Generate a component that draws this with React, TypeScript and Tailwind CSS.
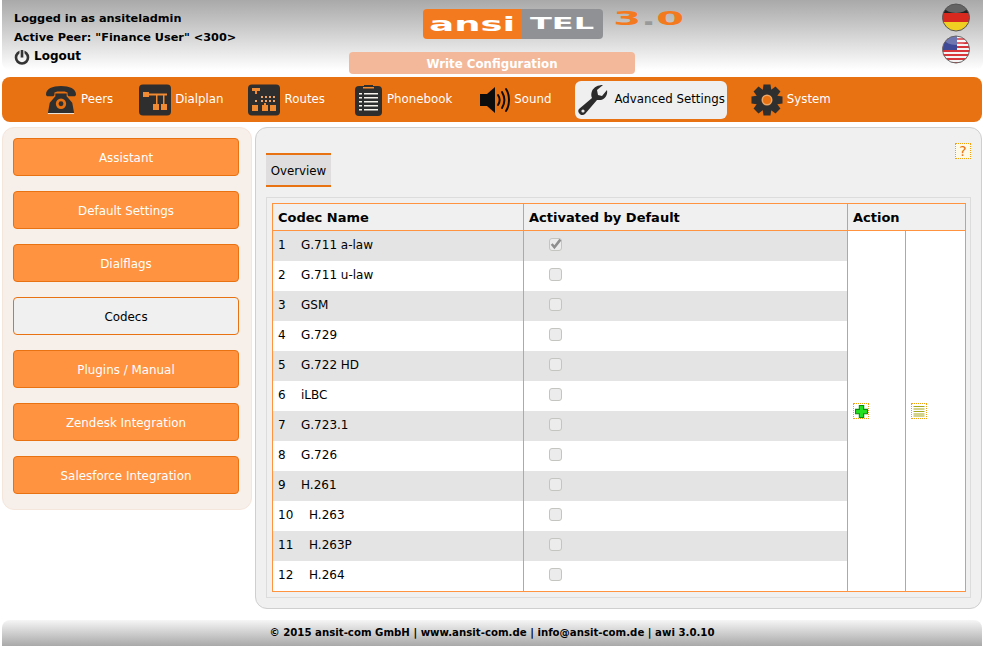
const codecs = [
  "G.711 a-law",
  "G.711 u-law",
  "GSM",
  "G.729",
  "G.722 HD",
  "iLBC",
  "G.723.1",
  "G.726",
  "H.261",
  "H.263",
  "H.263P",
  "H.264",
];

const sideItems = [
  "Assistant",
  "Default Settings",
  "Dialflags",
  "Codecs",
  "Plugins / Manual",
  "Zendesk Integration",
  "Salesforce Integration",
];

function PhoneIcon() {
  return (
    <svg width="32" height="30" viewBox="0 0 34 32">
      <path d="M1 10C1 4 8 1 17 1s16 3 16 9c0 1-1 2-2 2h-5c-1 0-2-1-2-2V8c-2-1-4-1-7-1s-5 0-7 1v2c0 1-1 2-2 2H3c-1 0-2-1-2-2z" fill="#2f2f2f" />
      <path d="M11 9h12v3l6 7 2 11H3l2-11 6-7z" fill="#2f2f2f" />
      <circle cx="17" cy="20" r="5.5" fill="#e87111" />
      <circle cx="17" cy="20" r="2.6" fill="#2f2f2f" />
      <path d="M3 30h28v1H3z" fill="#f4f4f4" />
    </svg>
  );
}

function DialplanIcon() {
  return (
    <svg width="32" height="32" viewBox="0 0 32 32">
      <rect width="32" height="31" y="0.5" rx="4" fill="#2e2e2e" />
      <rect x="4" y="8" width="6" height="5" fill="#f08a33" />
      <path d="M10 9.5h18v2H10z" fill="#f08a33" />
      <path d="M17 11h1.5v10H17zM24 11h1.5v10H24z" fill="#f08a33" />
      <rect x="14" y="20" width="6" height="6" fill="#f08a33" />
      <rect x="22" y="20" width="6" height="6" fill="#f08a33" />
    </svg>
  );
}

function RoutesIcon() {
  return (
    <svg width="32" height="32" viewBox="0 0 32 32">
      <rect width="32" height="31" y="0.5" rx="4" fill="#2e2e2e" />
      <rect x="4" y="4" width="8" height="3" fill="#f08a33" />
      <rect x="7" y="7" width="2" height="3" fill="#f08a33" />
      <path d="M13 12h2v2h-2zM17 12h2v2h-2zM21 12h2v2h-2zM25 12h2v2h-2zM7 16h2v2H7zM13 16h2v2h-2zM17 16h2v2h-2zM21 16h2v2h-2zM25 16h2v2h-2z" fill="#f0a468" />
      <rect x="4" y="21" width="6" height="6" fill="#f08a33" />
      <rect x="14" y="21" width="6" height="6" fill="#f08a33" />
      <rect x="22" y="21" width="6" height="6" fill="#f08a33" />
      <rect x="16" y="19" width="2" height="2" fill="#f08a33" />
    </svg>
  );
}

function PhonebookIcon() {
  return (
    <svg width="28" height="32" viewBox="0 0 28 32">
      <rect y="2" width="27" height="30" rx="4" fill="#2e2e2e" />
      <path d="M9 3h9V1h-9z" fill="#2e2e2e" />
      <path d="M8 3h11v1.5H8z" fill="#f08a33" />
      <path d="M4 9h3v1.5H4zM9 9h14v1.5H9zM4 13h3v1.5H4zM9 13h14v1.5H9zM4 17h3v1.5H4zM9 17h14v1.5H9zM4 21h3v1.5H4zM9 21h14v1.5H9zM4 25h3v1.5H4zM9 25h14v1.5H9z" fill="#f6f1ea" />
    </svg>
  );
}

function SoundIcon() {
  return (
    <svg width="32" height="28" viewBox="0 0 32 28">
      <path d="M1 8h7l8-7v26l-8-7H1z" fill="#0d0d0d" />
      <path d="M19 9c2 3 2 7 0 10M23 6c3 5 3 11 0 16M27 3c4 6 4 16 0 22" fill="none" stroke="#0d0d0d" strokeWidth="2" strokeLinecap="round" />
    </svg>
  );
}

function WrenchIcon() {
  return (
    <svg width="30" height="32" viewBox="0 0 30 32">
      <path d="M29 6c1 5-2 9-6 10-2 0-3 0-4 0L7 30c-2 2-5 1-6-1-1-1-1-3 0-4l13-11c-1-2-1-4 0-7 2-4 6-6 11-6l-6 5 1 5 4 1z" fill="#2b2b2b" />
      <circle cx="5" cy="27" r="1.6" fill="#e8e8e8" />
    </svg>
  );
}

function GearIcon() {
  const angles = [0, 45, 90, 135, 180, 225, 270, 315];
  return (
    <svg width="32" height="32" viewBox="0 0 32 32">
      {angles.map(a => (
        <path key={a} d="M12.5 0.5h7l1 7h-9z" fill="#2f2f2f" transform={`rotate(${a} 16 16)`} />
      ))}
      <circle cx="16" cy="16" r="11" fill="#2f2f2f" />
      <circle cx="16" cy="16" r="5.5" fill="#eda766" />
      <circle cx="16" cy="16" r="4" fill="#e87111" />
    </svg>
  );
}

function PowerIcon() {
  return (
    <svg width="16" height="16" viewBox="0 0 16 16">
      <circle cx="8" cy="8.5" r="6" fill="none" stroke="#333" strokeWidth="2.6" />
      <path d="M8 1v8" stroke="#e8e8e8" strokeWidth="5" />
      <path d="M8 1v7.5" stroke="#333" strokeWidth="2.6" />
    </svg>
  );
}

function GermanFlag() {
  return (
    <svg width="28" height="29" viewBox="0 0 28 29">
      <defs>
        <clipPath id="flagDe">
          <circle cx="14" cy="14.5" r="13.5" />
        </clipPath>
      </defs>
      <g clipPath="url(#flagDe)">
        <rect width="28" height="10" fill="#222" />
        <rect y="10" width="28" height="9" fill="#d8291f" />
        <rect y="19" width="28" height="10" fill="#f0cf22" />
        <ellipse cx="14" cy="5" rx="11" ry="5" fill="#fff" opacity="0.3" />
      </g>
      <circle cx="14" cy="14.5" r="13.5" fill="none" stroke="#555" />
    </svg>
  );
}

function UsFlag() {
  return (
    <svg width="28" height="29" viewBox="0 0 28 29">
      <defs>
        <clipPath id="flagUs">
          <circle cx="14" cy="14.5" r="13.5" />
        </clipPath>
      </defs>
      <g clipPath="url(#flagUs)">
        <rect width="28" height="29" fill="#f4f4f4" />
        <path d="M0 3h28v2H0zM0 7h28v2H0zM0 11h28v2H0zM0 15h28v2H0zM0 19h28v2H0zM0 23h28v2H0zM0 27h28v2H0z" fill="#d8353a" />
        <rect width="15" height="15" fill="#3f4a96" />
        <ellipse cx="14" cy="5" rx="11" ry="5" fill="#fff" opacity="0.25" />
      </g>
      <circle cx="14" cy="14.5" r="13.5" fill="none" stroke="#666" />
    </svg>
  );
}

export default function App() {
  return (
    <div className="flex h-[646px] w-[986px] flex-col overflow-hidden bg-white font-['DejaVu_Sans',sans-serif] text-[12px] text-black">
      {/* header */}
      <div className="mx-[2px] flex h-[70px] w-[981px] shrink-0 rounded-b-lg bg-gradient-to-b from-[#a9a9a9] to-white">
        <div className="w-[347px] shrink-0 pl-3 pt-[9px] text-[11.3px] font-bold leading-[19px]">
          <div className="h-[19px]">Logged in as ansiteladmin</div>
          <div className="h-[19px]">Active Peer: "Finance User" &lt;300&gt;</div>
          <div className="flex h-[19px] items-center gap-1 text-[12px]">
            <PowerIcon />
            Logout
          </div>
        </div>
        <div className="flex w-[286px] shrink-0 flex-col pt-[9px]">
          <div className="flex h-[30px] shrink-0 whitespace-nowrap pl-[74px]">
            <div className="flex h-[30px] w-[99px] shrink-0 items-center justify-center rounded-l-sm bg-[#f47a20] text-[20px] font-bold text-white">
              <span className="scale-x-[1.85] leading-none">ansi</span>
            </div>
            <div className="flex h-[30px] w-[81px] shrink-0 items-center justify-center rounded-r-sm bg-[#8f9195] text-[16px] font-bold text-white">
              <span className="scale-x-[2] leading-none">TEL</span>
            </div>
            <div className="ml-[12px] w-[68px] shrink-0 pt-[1px] text-center text-[20px] font-bold leading-[17px] text-[#f47a20]">
              <span className="inline-block scale-x-[2]">
                3<span className="text-[#999]">.</span>0
              </span>
            </div>
          </div>
          <button className="mt-[13px] h-[22px] w-[286px] shrink-0 rounded bg-[#f3b89a] pt-[3px] text-[11.8px] font-bold text-white">
            Write Configuration
          </button>
        </div>
        <div className="flex-1" />
        <div className="flex w-[41px] flex-col gap-[3px] pt-[3px]">
          <GermanFlag />
          <UsFlag />
        </div>
      </div>

      {/* nav */}
      <div className="mx-[2px] mt-[7px] flex h-[45px] w-[980px] shrink-0 items-center rounded-lg bg-[#e87111] pl-[43px] text-[11.8px] text-white">
        <div className="flex items-center gap-[4px]"><PhoneIcon /><span>Peers</span></div>
        <div className="ml-[26px] flex items-center gap-[4px]"><DialplanIcon /><span>Dialplan</span></div>
        <div className="ml-[24px] flex items-center gap-[5px]"><RoutesIcon /><span>Routes</span></div>
        <div className="ml-[30px] flex items-center gap-[4px]"><PhonebookIcon /><span>Phonebook</span></div>
        <div className="ml-[27px] flex items-center gap-[3px]"><SoundIcon /><span>Sound</span></div>
        <div className="ml-[24px] flex h-[38px] items-center gap-[6px] rounded-md bg-[#efefef] pl-[3px] pr-[2px] text-black"><WrenchIcon /><span>Advanced Settings</span></div>
        <div className="ml-[24px] flex items-center gap-[4px]"><GearIcon /><span>System</span></div>
      </div>

      {/* body */}
      <div className="mx-[2px] mt-[5px] flex h-[482px] shrink-0 gap-[3px]">
        <div className="h-[383px] w-[250px] rounded-xl border border-[#f5e6dc] bg-[#f7efe9] px-[10px] pt-[10px]">
          <div className="flex flex-col gap-[15px]">
            {sideItems.map(item => (
              <button
                key={item}
                className={
                  item === "Codecs"
                    ? "h-[38px] w-[226px] rounded border border-[#e87111] bg-[#f0f0f0] pt-[3px] text-[11.9px] text-black"
                    : "h-[38px] w-[226px] rounded border border-[#e87111] bg-[#ff9340] pt-[3px] text-[11.9px] text-white"
                }
              >
                {item}
              </button>
            ))}
          </div>
        </div>

        <div className="relative h-[482px] w-[727px] rounded-xl border border-[#cfcfcf] bg-[#f0f0f0] px-[10px] pt-[25px]">
          <div className="absolute right-[10px] top-[15px] flex h-4 w-4 items-center justify-center border border-dotted border-[#f0a010] bg-[#fdfbe8] text-[14px] leading-none text-[#e87111]">?</div>
          <div className="flex h-[34px] w-[65px] items-center justify-center border-y-2 border-[#e87111] bg-[#dfdddd] pt-[4px] text-[11.8px]">Overview</div>
          <div className="mt-[10px] w-[705px] border border-[#dcdcdc] p-[5px]">
            <div className="w-[694px] border border-[#ff9340]">
              <table className="w-[692px] table-fixed border-separate border-spacing-0">
                <colgroup>
                  <col className="w-[251px]" />
                  <col className="w-[324px]" />
                  <col className="w-[58px]" />
                  <col className="w-[59px]" />
                </colgroup>
                <thead>
                  <tr className="h-[27px] text-left text-[13px] font-bold">
                    <th className="border-b border-r border-[#ff9340] bg-[#f0f0f0] px-[5px] pt-[2px]">Codec Name</th>
                    <th className="border-b border-r border-[#ff9340] bg-[#f0f0f0] px-[5px] pt-[2px]">Activated by Default</th>
                    <th colSpan={2} className="border-b border-[#ff9340] bg-[#f0f0f0] px-[5px] pt-[2px]">Action</th>
                  </tr>
                </thead>
                <tbody>
                  {codecs.map((name, i) => (
                    <tr key={name} className="h-[30px]">
                      <td className={i % 2 === 0 ? "border-r border-[#ff9340] bg-[#e4e4e4] px-[5px] pb-[2px]" : "border-r border-[#ff9340] bg-white px-[5px] pb-[2px]"}>
                        <span className="inline-block w-[23px] whitespace-nowrap">{i + 1}</span>
                        <span className={i > 8 ? "ml-2" : ""}>{name}</span>
                      </td>
                      <td className={i % 2 === 0 ? "border-r border-[#ff9340] bg-[#e4e4e4] pb-[4px] pl-[25px]" : "border-r border-[#ff9340] bg-white pb-[4px] pl-[25px]"}>
                        <span className="flex h-[13px] w-[13px] items-center justify-center rounded-[3px] border border-[#c4c4c0] bg-[#ececec]">
                          {i === 0 && (
                            <svg width="13" height="13" viewBox="0 0 12 12" className="shrink-0 overflow-visible">
                              <path d="M2.5 5.5l2.5 3 5.5-7" fill="none" stroke="#8f8f8f" strokeWidth="2.4" />
                            </svg>
                          )}
                        </span>
                      </td>
                      {i === 0 && (
                        <>
                          <td rowSpan={12} className="border-r border-[#ff9340] bg-white pl-[5px]">
                            <span className="flex h-4 w-4 items-center justify-center border border-dotted border-[#f0a010]">
                              <svg width="13" height="13" viewBox="0 0 12 12">
                                <path d="M4 0.5h4v3.5h3.5v4H8v3.5H4V8H0.5V4H4z" fill="#22e022" stroke="#0a8a0a" />
                              </svg>
                            </span>
                          </td>
                          <td rowSpan={12} className="bg-white pl-[5px]">
                            <span className="flex h-4 w-4 items-center justify-center border border-dotted border-[#f0a010]">
                              <svg width="12" height="12" viewBox="0 0 12 12">
                                <path d="M0.5 1.5h11M0.5 4h11M0.5 6.5h11M0.5 9h11M0.5 11h11" stroke="#a8a81c" strokeWidth="1.2" />
                              </svg>
                            </span>
                          </td>
                        </>
                      )}
                    </tr>
                  ))}
                </tbody>
              </table>
            </div>
          </div>
        </div>
      </div>

      {/* footer */}
      <div className="mx-[2px] mt-[11px] flex h-[26px] w-[980px] shrink-0 items-center justify-center rounded-t-lg bg-gradient-to-b from-[#f6f6f6] to-[#a9a9a9] text-[10.2px] font-bold">
        © 2015 ansit-com GmbH | www.ansit-com.de | info@ansit-com.de | awi 3.0.10
      </div>
    </div>
  );
}
